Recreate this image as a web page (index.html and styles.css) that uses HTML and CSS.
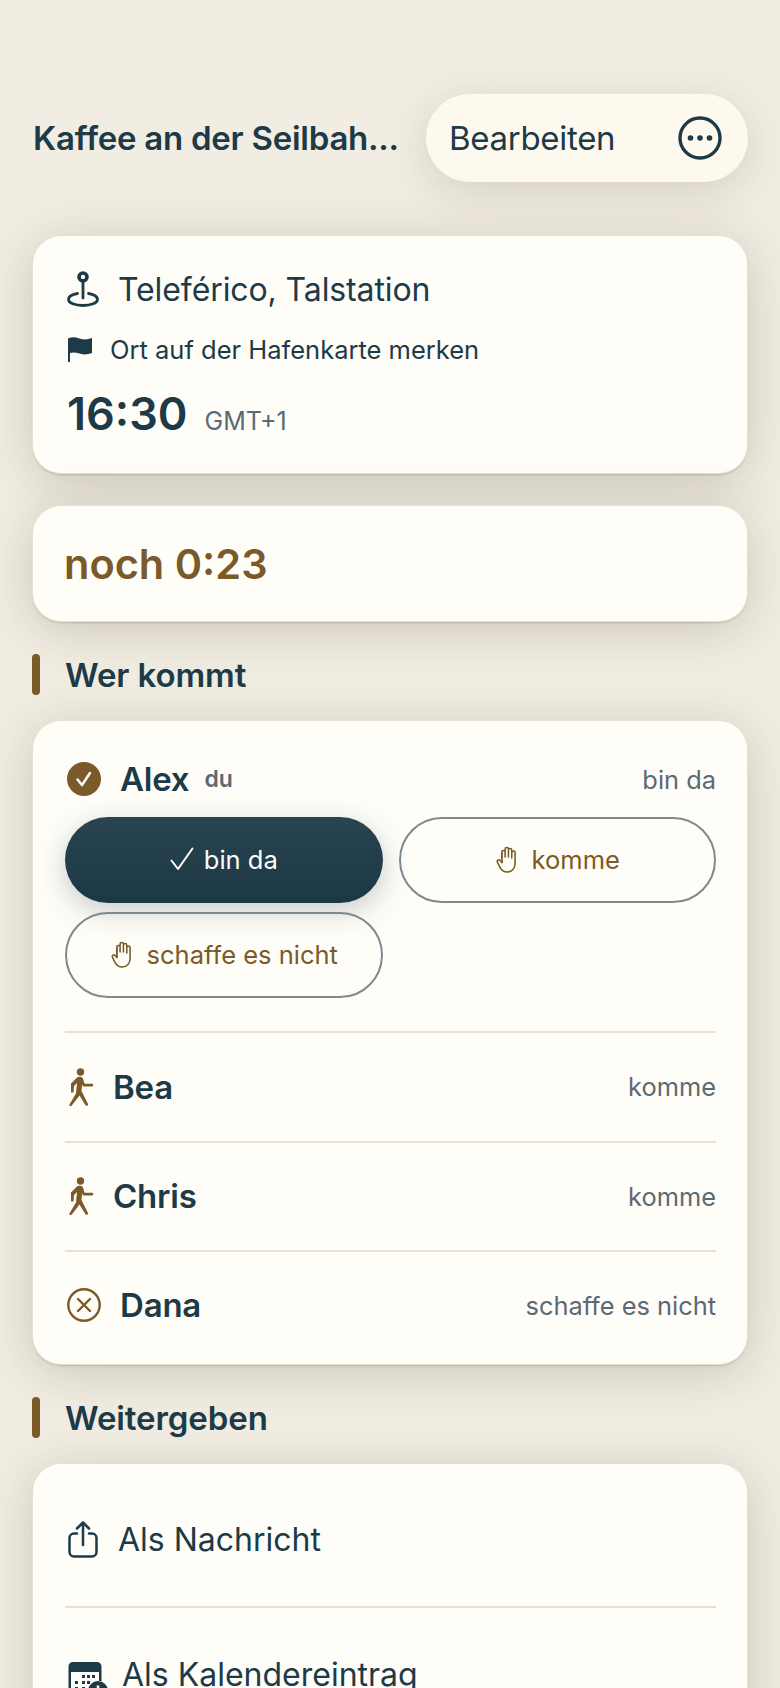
FILE: index.html
```html
<!DOCTYPE html>
<html lang="de">
<head>
    <meta charset="utf-8">
    <title>Kaffee an der Seilbahn</title>
    <link rel="stylesheet" href="styles.css">
</head>
<body>
    <svg class="defs" width="0" height="0">
        <symbol id="hand" viewBox="0 0 24 28">
            <path d="M6.500 14V7.500a1.600 1.600 0 0 1 3.200 0M9.700 12V4.500a1.600 1.600 0 0 1 3.200 0V12M12.900 12V5.500a1.600 1.600 0 0 1 3.200 0V12M16.100 13V8a1.600 1.600 0 0 1 3.200 0v10c0 5-3 8.500-7.500 8.500-3.500 0-5.500-1.500-7-4.500l-2.500-5c-.8-1.600 1.500-3 2.700-1.500l1.800 2V7.500" fill="none" stroke="currentColor" stroke-width="1.500" stroke-linecap="round" stroke-linejoin="round"/>
        </symbol>
        <symbol id="walk" viewBox="0 0 26 38">
            <circle cx="12.500" cy="4" r="3.700" fill="currentColor"/>
            <path d="M9 9.500c2-1 5-1 6 1l1.500 5.300H24a1.300 1.300 0 0 1 0 2.600h-9l-.8-2.400-.7 7L20 36c.6 1.600-1.600 2.600-2.500 1.200L11.500 27.500 3.800 37.600c-1 1.200-3 .1-2.200-1.400L8 25.500 9 15l-3 3-.5 6.500H3V15.500z" fill="currentColor"/>
        </symbol>
    </svg>

    <header class="topbar">
        <h1 class="title">Kaffee an der Seilbah...</h1>
        <button class="edit-btn">
            <span>Bearbeiten</span>
            <svg class="more-icon" viewBox="0 0 44 44">
                <circle cx="22" cy="22" r="20" fill="none" stroke="currentColor" stroke-width="3.400"/>
                <circle cx="12.500" cy="22" r="2.800" fill="currentColor"/>
                <circle cx="22" cy="22" r="2.800" fill="currentColor"/>
                <circle cx="31.500" cy="22" r="2.800" fill="currentColor"/>
            </svg>
        </button>
    </header>

    <section class="card info-card">
        <div class="place">
            <svg class="pin-icon" viewBox="0 0 32 36">
                <circle cx="16" cy="6" r="4" fill="none" stroke="currentColor" stroke-width="3.600"/>
                <path d="M16 10v17" stroke="currentColor" stroke-width="2.800" stroke-linecap="round"/>
                <path d="M10.500 22.500C5 23.500 1.500 25.500 1.500 28.500c0 3.500 6.500 6 14.500 6s14.500-2.500 14.500-6c0-3-3.500-5-9-6" fill="none" stroke="currentColor" stroke-width="2.800" stroke-linecap="round"/>
            </svg>
            <span>Teleférico, Talstation</span>
        </div>
        <div class="harbour">
            <svg class="flag-icon" viewBox="0 0 24 25">
                <path d="M0 1.500c4-1.800 7.500-1.200 11.500 0 4 1.200 8 1.300 12.500-.5v15c-4.500 1.800-8.500 1.700-12.500.5C8 15.400 5 15 2 16v9H0z" fill="currentColor"/>
            </svg>
            <span>Ort auf der Hafenkarte merken</span>
        </div>
        <div class="time">
            <span class="clock">16:30</span>
            <span class="zone">GMT+1</span>
        </div>
    </section>

    <section class="card countdown">noch 0:23</section>

    <h2 class="section-title">Wer kommt</h2>
    <section class="card people">
        <div class="me">
            <div class="person">
                <svg class="status-icon" viewBox="0 0 34 34">
                    <circle cx="17" cy="17" r="17" fill="currentColor"/>
                    <path d="M10.500 17.500l4.500 5.500 8-12" fill="none" stroke="#fffdf8" stroke-width="2.500" stroke-linecap="round" stroke-linejoin="round"/>
                </svg>
                <span class="name">Alex</span>
                <span class="you">du</span>
                <span class="state">bin da</span>
            </div>
            <div class="choices">
                <button class="choice active">
                    <svg class="tick-icon" viewBox="0 0 24 24"><path d="M1.500 13.500L8 22 22.500 1.500" fill="none" stroke="currentColor" stroke-width="2" stroke-linecap="round" stroke-linejoin="round"/></svg>
                    bin da
                </button>
                <button class="choice"><svg class="hand-icon"><use href="#hand"/></svg> komme</button>
                <button class="choice"><svg class="hand-icon"><use href="#hand"/></svg> schaffe es nicht</button>
            </div>
        </div>
        <div class="person row">
            <svg class="walk-icon"><use href="#walk"/></svg>
            <span class="name">Bea</span>
            <span class="state">komme</span>
        </div>
        <div class="person row">
            <svg class="walk-icon"><use href="#walk"/></svg>
            <span class="name">Chris</span>
            <span class="state">komme</span>
        </div>
        <div class="person row">
            <svg class="status-icon" viewBox="0 0 34 34">
                <circle cx="17" cy="17" r="15.700" fill="none" stroke="currentColor" stroke-width="2.400"/>
                <path d="M11 11l12 12M23 11L11 23" stroke="currentColor" stroke-width="2.400" stroke-linecap="round"/>
            </svg>
            <span class="name">Dana</span>
            <span class="state">schaffe es nicht</span>
        </div>
    </section>

    <h2 class="section-title">Weitergeben</h2>
    <section class="card share">
        <div class="share-row">
            <svg class="share-icon" viewBox="0 0 30 37">
                <path d="M15 2v22M9 7.500L15 1.500l6 6" fill="none" stroke="currentColor" stroke-width="2.500" stroke-linecap="round" stroke-linejoin="round"/>
                <path d="M9 12.500H6A4.500 4.500 0 0 0 1.500 17v14A4.500 4.500 0 0 0 6 35.500h18a4.500 4.500 0 0 0 4.500-4.500V17a4.500 4.500 0 0 0-4.500-4.500h-3" fill="none" stroke="currentColor" stroke-width="2.500" stroke-linecap="round"/>
            </svg>
            <span>Als Nachricht</span>
        </div>
        <div class="share-row">
            <svg class="cal-icon" viewBox="0 0 40 40">
                <path d="M5 1h24a4.500 4.500 0 0 1 4.500 4.500V20H31V11H3v20h14v2.500H5A4.500 4.500 0 0 1 .5 29V5.500A4.500 4.500 0 0 1 5 1z" fill="currentColor"/>
                <g fill="currentColor">
                    <rect x="14" y="14" width="3" height="3"/><rect x="19" y="14" width="3" height="3"/><rect x="24" y="14" width="3" height="3"/>
                    <rect x="7" y="20" width="3" height="3"/><rect x="14" y="20" width="3" height="3"/><rect x="19" y="20" width="3" height="3"/>
                    <rect x="7" y="26" width="3" height="3"/><rect x="14" y="26" width="3" height="3"/>
                </g>
                <circle cx="30" cy="30" r="10" fill="currentColor"/>
                <path d="M30 24.500v11M24.500 30h11" stroke="#fffdf8" stroke-width="2.500"/>
            </svg>
            <span>Als Kalendereintrag</span>
        </div>
    </section>
</body>
</html>
```

FILE: styles.css
```css
html, body {
    margin: 0;
    height: 1688px;
    overflow: hidden;
}
body {
    box-sizing: border-box;
    padding: 94px 33px 0;
    background-color: #f2ede2;
    color: #1c3a47;
    font-family: Inter, "Liberation Sans", sans-serif;
}
.defs {
    position: absolute;
}
button {
    font-family: inherit;
}

/* top bar */
.topbar {
    display: flex;
    align-items: center;
    justify-content: space-between;
    margin-right: -1px;
    margin-bottom: 54px;
}
.title {
    margin: 0;
    font-size: 33px;
    font-weight: 600;
    letter-spacing: -0.25px;
    white-space: nowrap;
}
.edit-btn {
    display: flex;
    align-items: center;
    justify-content: space-between;
    box-sizing: border-box;
    width: 322px;
    height: 88px;
    padding: 0 26px 0 23px;
    border: none;
    border-radius: 44px;
    background-color: #fef9ee;
    box-shadow: 0 10px 44px rgba(60, 55, 35, 0.16);
    color: #1c3a47;
    font-size: 33px;
    letter-spacing: -0.3px;
}
.more-icon {
    width: 44px;
    height: 44px;
}

/* cards */
.card {
    box-sizing: border-box;
    border-radius: 28px;
    background-color: #fffdf8;
    box-shadow: 0 0 0 1px #e6e1d2, 0 2px 2px rgba(90, 80, 50, 0.25), 0 8px 50px rgba(60, 55, 35, 0.22);
}
.info-card {
    height: 237px;
    padding: 31px 32px 0;
    margin-bottom: 33px;
}
.place {
    display: flex;
    align-items: center;
    gap: 19px;
    height: 44px;
    font-size: 32px;
    letter-spacing: -0.1px;
}
.pin-icon {
    width: 32px;
    height: 36px;
    margin-left: 2px;
}
.harbour {
    display: flex;
    align-items: center;
    gap: 18px;
    height: 36px;
    margin-top: 20px;
    font-size: 25.5px;
}
.flag-icon {
    width: 24px;
    height: 25px;
    margin-left: 3px;
}
.time {
    display: flex;
    align-items: baseline;
    gap: 17px;
    margin-top: 19px;
    padding-left: 2px;
}
.clock {
    font-size: 45px;
    font-weight: 600;
}
.zone {
    color: #5b6a72;
    font-size: 25px;
}
.countdown {
    display: flex;
    align-items: center;
    height: 115px;
    padding: 0 31px;
    color: #7a5a28;
    font-size: 41.5px;
    font-weight: 600;
}

/* section heading with the brown bar */
.section-title {
    display: flex;
    align-items: center;
    height: 41px;
    margin: 33px 0 26px -1px;
    font-size: 33px;
    font-weight: 600;
    letter-spacing: -0.1px;
}
.section-title::before {
    content: "";
    width: 8px;
    height: 41px;
    margin-right: 25px;
    border-radius: 4px;
    background-color: #7a5a28;
}

/* people list */
.people {
    height: 643px;
    padding: 0 31px 0 32px;
}
.me {
    padding: 38px 0 33px;
    border-bottom: 2px solid #e6e1d2;
}
.person {
    display: flex;
    align-items: center;
    height: 40px;
}
.row {
    height: 107.5px;
    border-bottom: 2px solid #e6e1d2;
}
.row:last-child {
    height: 106px;
    border-bottom: none;
}
.status-icon {
    width: 34px;
    height: 34px;
    margin-right: 19px;
    margin-left: 2px;
    color: #7a5a28;
}
.walk-icon {
    width: 26px;
    height: 38px;
    margin-right: 19px;
    margin-left: 3px;
    color: #7a5a28;
}
.name {
    font-size: 33px;
    font-weight: 600;
    letter-spacing: -0.2px;
}
.you {
    margin-left: 15px;
    color: #5b6a72;
    font-size: 23px;
    font-weight: 600;
}
.state {
    margin-left: auto;
    color: #5b6a72;
    font-size: 25.4px;
}
.choices {
    display: grid;
    grid-template-columns: 1fr 1fr;
    gap: 9px 16px;
    margin-top: 18px;
}
.choice {
    display: flex;
    align-items: center;
    justify-content: center;
    gap: 12px;
    height: 86px;
    padding: 0 0 2px;
    border: 2px solid #7d898e;
    border-radius: 43px;
    background: transparent;
    color: #7a5a28;
    font-size: 25.5px;
}
.choice.active {
    gap: 10px;
    border: none;
    background: linear-gradient(#294450, #1b3845);
    box-shadow: 0 8px 28px rgba(28, 58, 71, 0.25);
    color: #fffdf8;
}
.tick-icon {
    width: 24px;
    height: 24px;
}
.hand-icon {
    width: 25px;
    height: 30px;
}

/* share list */
.share {
    height: 400px;
    padding: 0 31px 0 32px;
}
.share-row {
    display: flex;
    align-items: center;
    box-sizing: border-box;
    height: 132px;
    font-size: 32px;
}
.share-row:first-child {
    height: 144px;
    padding-top: 8px;
    border-bottom: 2px solid #e6e1d2;
}
.share-icon {
    width: 30px;
    height: 37px;
    margin-right: 20px;
    margin-left: 3px;
}
.cal-icon {
    width: 40px;
    height: 40px;
    margin-top: 14px;
    margin-right: 14px;
    margin-left: 3px;
}
```
